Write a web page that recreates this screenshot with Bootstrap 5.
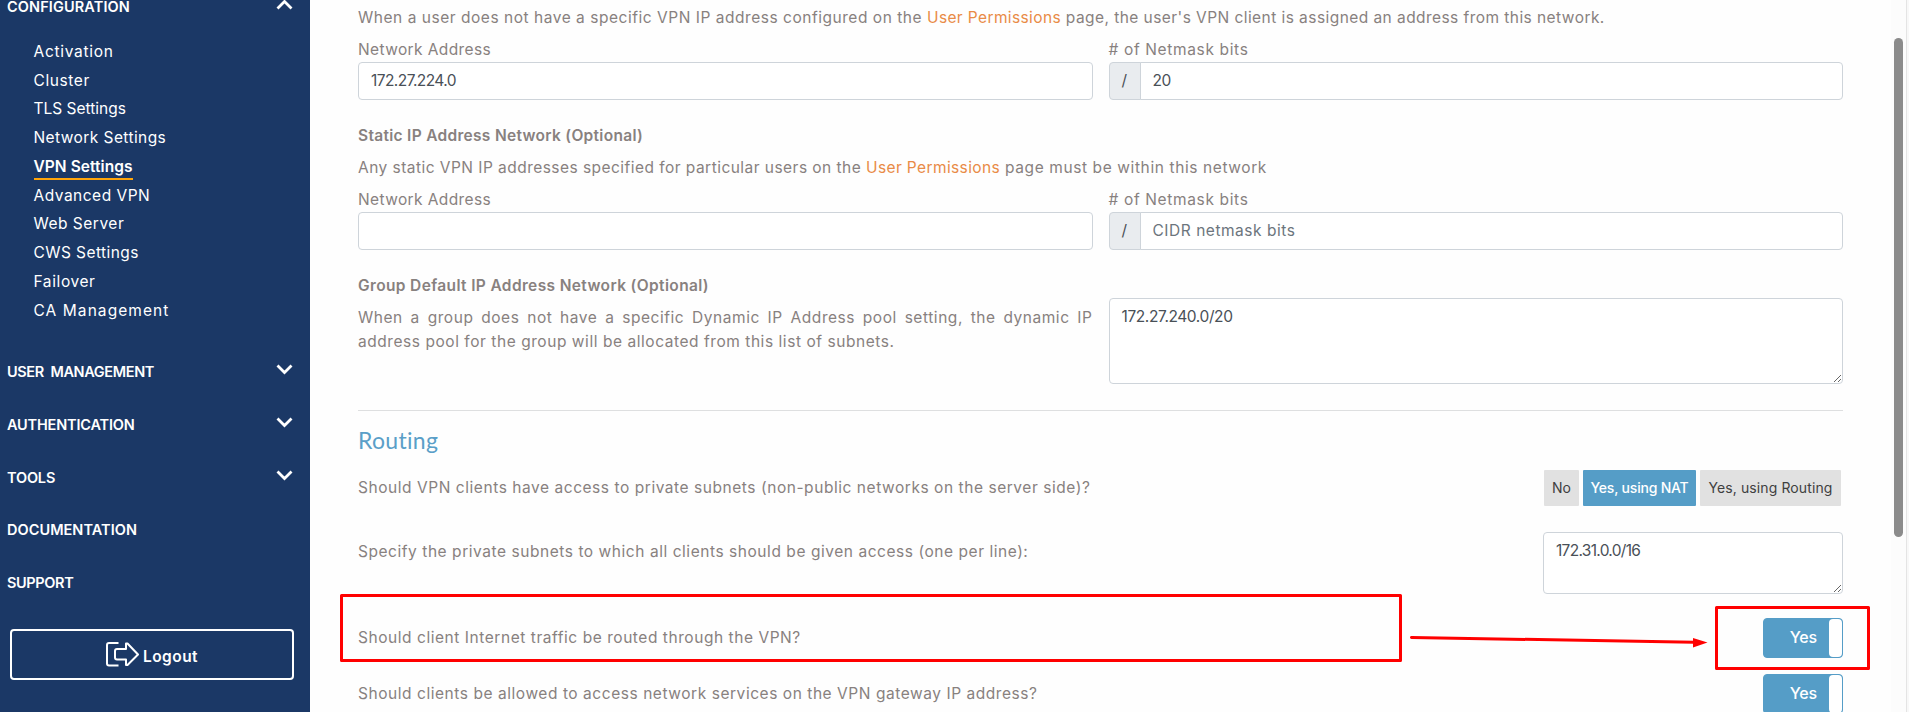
<!DOCTYPE html>
<html lang="en">
<head>
<meta charset="utf-8">
<title>VPN Settings</title>
<link rel="stylesheet" href="https://cdn.jsdelivr.net/npm/bootstrap@5.3.0/dist/css/bootstrap.min.css">
<style>
body{font-family:Inter,"Liberation Sans",sans-serif;font-size:15.5px;line-height:24px;color:#88817f;background:#fefefe;letter-spacing:.5px}
.app-shell{height:712px}
.side-bar{width:310px;background:#1b3866;color:#fff}
.side-inner{margin-top:-19px;padding:0 17px 0 7px}
.side-head{height:52.7px;font-size:14.5px;line-height:14px;font-weight:600;color:#fff;letter-spacing:0;white-space:pre}
.side-head svg{width:17px;height:11px;margin-top:-5px}
.side-menu{margin:3.7px 0 21px;padding-left:26.5px}
.side-menu li{height:28.75px;display:flex;align-items:center}
.side-menu a{color:#fff;text-decoration:none}
.side-menu .current{font-weight:600;letter-spacing:.05px;border-bottom:2px solid #ffa50a;line-height:23px;padding-top:2px;margin-top:-1px}
.logout-btn{height:51px;width:284px;margin:19.5px 0 0 3px;border:2px solid #fff;border-radius:4px;color:#fff;font-size:15.5px;font-weight:600;padding:0;letter-spacing:.45px}
.logout-btn:hover{color:#fff}
.main-pane{padding:6px 48px 0 48px;width:1581px}
.main-pane a{color:#e98b46;text-decoration:none}
.row-tight{--bs-gutter-x:16px}
.form-control,.input-group-text{font-size:15.5px;line-height:24px;border-color:#ced4da;border-radius:4px;color:#495057}
.form-control{background:#fff;letter-spacing:-.56px;padding:6px 12px}
.form-control::placeholder{color:#6c757d;letter-spacing:.53px}
.input-group-text{background:#e9ecef;width:32px;justify-content:center;padding:0}
h6{font-size:15.5px;line-height:24px;font-weight:600;letter-spacing:.3px;margin:24px 0 8px}
.rule-line{height:1px;background:#dedfe0;margin:26px 0 14px}
h4{font-family:Lato,sans-serif;font-size:23px;line-height:30px;font-weight:400;color:#5a9fc8;letter-spacing:.3px;margin:0 0 15px}
.q-row{letter-spacing:.55px}
.opt-btn{height:36px;padding:0;border:0;border-radius:1px;background:#e1e1e1;color:#3f3f3f;font-size:14px;letter-spacing:.1px;text-align:center;white-space:nowrap}
.opt-no{width:35px}.opt-nat{width:113px}.opt-routing{width:141px;margin-right:2px}
.opt-btn.chosen{background:#559dc7;color:#fff;font-weight:500;letter-spacing:-.2px}
.switch-box{width:80px;height:40px;border:1px solid #559dc7;border-radius:4px;background:#559dc7;color:#fff;font-size:16px;font-weight:500;letter-spacing:-.2px}
.switch-box span{margin-right:12px;padding-bottom:3px}
.switch-box i{width:13px;height:38px;background:#fff;border-radius:4px}
.dyn-intro{letter-spacing:.53px}.dyn-intro a{letter-spacing:.38px}.dyn-intro .rest{letter-spacing:.44px}
.static-intro{letter-spacing:.46px}.static-intro a{letter-spacing:.38px}.static-intro .rest{letter-spacing:.6px}
.group-head{letter-spacing:.364px}
.group-intro{text-align:justify;letter-spacing:.55px}
.group-area{height:86px;margin-top:48px;letter-spacing:-.4px}
.subnet-area{width:300px;height:62px;letter-spacing:-.7px}
.gap-subnets{margin-top:26px}.gap-internet{margin-top:24px}.gap-gateway{margin-top:16px}
.track{width:16px;background:#fcfcfc;border-right:1px solid #e4e4e4;padding:38px 3px 0}
.thumb{width:9px;height:499px;border-radius:5px;background:#8b8b8b}
.edge{width:2px;background:#f8f8f8}
.marks{left:0;top:0;pointer-events:none}
.n1{letter-spacing:.38px}.n2{letter-spacing:.645px}
.side-menu .t0{letter-spacing:0}.side-menu .t4{letter-spacing:.42px}.side-menu .t6{letter-spacing:.6px}.side-menu .t7{letter-spacing:.7px}.side-menu .t10{letter-spacing:1.07px}
.k1{letter-spacing:.12px}.k2{letter-spacing:-.37px}.k3{letter-spacing:-.18px}.k4{letter-spacing:.04px}
</style>
</head>
<body class="overflow-hidden">
<div class="app-shell d-flex position-relative overflow-hidden">
<nav class="side-bar flex-shrink-0 overflow-hidden">
<div class="side-inner">
<div class="side-head d-flex align-items-center justify-content-between"><span class="k1">CONFIGURATION</span><svg viewBox="0 0 17 11" fill="none" stroke="#fff" stroke-width="2.8"><path d="M1.5 9.5 8.5 2.5 15.5 9.5"/></svg></div>
<ul class="side-menu list-unstyled">
<li><a href="#" class="t7">Activation</a></li>
<li><a href="#" class="t6">Cluster</a></li>
<li><a href="#" class="t0">TLS Settings</a></li>
<li><a href="#" class="t4">Network Settings</a></li>
<li><a href="#" class="current">VPN Settings</a></li>
<li><a href="#">Advanced VPN</a></li>
<li><a href="#">Web Server</a></li>
<li><a href="#" class="t4">CWS Settings</a></li>
<li><a href="#" class="t6">Failover</a></li>
<li><a href="#" class="t10">CA Management</a></li>
</ul>
<div class="side-head d-flex align-items-center justify-content-between"><span class="k2">USER  MANAGEMENT</span><svg viewBox="0 0 17 11" fill="none" stroke="#fff" stroke-width="2.8"><path d="M1.5 1.5 8.5 8.5 15.5 1.5"/></svg></div>
<div class="side-head d-flex align-items-center justify-content-between"><span class="k3">AUTHENTICATION</span><svg viewBox="0 0 17 11" fill="none" stroke="#fff" stroke-width="2.8"><path d="M1.5 1.5 8.5 8.5 15.5 1.5"/></svg></div>
<div class="side-head d-flex align-items-center justify-content-between"><span class="k3">TOOLS</span><svg viewBox="0 0 17 11" fill="none" stroke="#fff" stroke-width="2.8"><path d="M1.5 1.5 8.5 8.5 15.5 1.5"/></svg></div>
<div class="side-head d-flex align-items-center"><span class="k4">DOCUMENTATION</span></div>
<div class="side-head d-flex align-items-center"><span class="k2">SUPPORT</span></div>
<button class="btn logout-btn d-flex align-items-center justify-content-center"><svg class="me-1" width="33" height="25" viewBox="0 0 33 25" fill="none" stroke="#fff" stroke-width="2" stroke-linejoin="round"><path d="M12.5 1H3Q1 1 1 3v18.500Q1 23.500 3 23.500h9.500"/><path d="M20 1.500v5.500h-9Q9 7 9 9v6.500q0 2 2 2h9v5.500h1.500L32 12.500 21.500 1.500Z"/></svg><span class="pt-1">Logout</span></button>
</div>
</nav>
<main class="main-pane flex-shrink-0">
<p class="mb-2 dyn-intro">When a user does not have a specific VPN IP address configured on the <a href="#">User Permissions</a><span class="rest"> page, the user's VPN client is assigned an address from this network.</span></p>
<div class="row row-tight">
<div class="col-6"><label class="d-block n1">Network Address</label><input class="form-control" value="172.27.224.0"></div>
<div class="col-6"><label class="d-block n2"># of Netmask bits</label><div class="input-group"><span class="input-group-text">/</span><input class="form-control" value="20"></div></div>
</div>
<h6>Static IP Address Network (Optional)</h6>
<p class="mb-2 static-intro">Any static VPN IP addresses specified for particular users on the <a href="#">User Permissions</a><span class="rest"> page must be within this network</span></p>
<div class="row row-tight">
<div class="col-6"><label class="d-block n1">Network Address</label><input class="form-control"></div>
<div class="col-6"><label class="d-block n2"># of Netmask bits</label><div class="input-group"><span class="input-group-text">/</span><input class="form-control" placeholder="CIDR netmask bits"></div></div>
</div>
<div class="row row-tight">
<div class="col-6"><h6 class="group-head">Group Default IP Address Network (Optional)</h6><p class="mb-0 group-intro">When a group does not have a specific Dynamic IP Address pool setting, the dynamic IP address pool for the group will be allocated from this list of subnets.</p></div>
<div class="col-6"><textarea class="form-control group-area">172.27.240.0/20</textarea></div>
</div>
<div class="rule-line"></div>
<h4>Routing</h4>
<div class="q-row d-flex justify-content-between align-items-center"><span>Should VPN clients have access to private subnets (non-public networks on the server side)?</span>
<div class="d-flex gap-1"><button class="opt-btn opt-no">No</button><button class="opt-btn opt-nat chosen">Yes, using NAT</button><button class="opt-btn opt-routing">Yes, using Routing</button></div></div>
<div class="q-row gap-subnets d-flex justify-content-between align-items-start"><span class="pt-2">Specify the private subnets to which all clients should be given access (one per line):</span><textarea class="form-control subnet-area">172.31.0.0/16</textarea></div>
<div class="q-row gap-internet d-flex justify-content-between align-items-center"><span>Should client Internet traffic be routed through the VPN?</span><div class="switch-box d-flex align-items-center justify-content-end"><span>Yes</span><i></i></div></div>
<div class="q-row gap-gateway d-flex justify-content-between align-items-center"><span>Should clients be allowed to access network services on the VPN gateway IP address?</span><div class="switch-box d-flex align-items-center justify-content-end"><span>Yes</span><i></i></div></div>
</main>
<div class="track flex-shrink-0"><div class="thumb"></div></div>
<div class="edge flex-shrink-0"></div>
<svg class="marks position-absolute" width="1909" height="712" viewBox="0 0 1909 712" fill="none" stroke="#f00" stroke-width="3" stroke-linejoin="round"><rect x="341.500" y="595.500" width="1059" height="65"/><rect x="1716.500" y="607.500" width="152" height="61"/><path d="M1411.500 637.500 1694 642.200" stroke-linecap="round"/><path d="M1693 638v9.500l14.500-5Z" fill="#f00" stroke="none"/></svg>
</div>
<script src="https://cdn.jsdelivr.net/npm/bootstrap@5.3.0/dist/js/bootstrap.bundle.min.js"></script>
</body>
</html>
